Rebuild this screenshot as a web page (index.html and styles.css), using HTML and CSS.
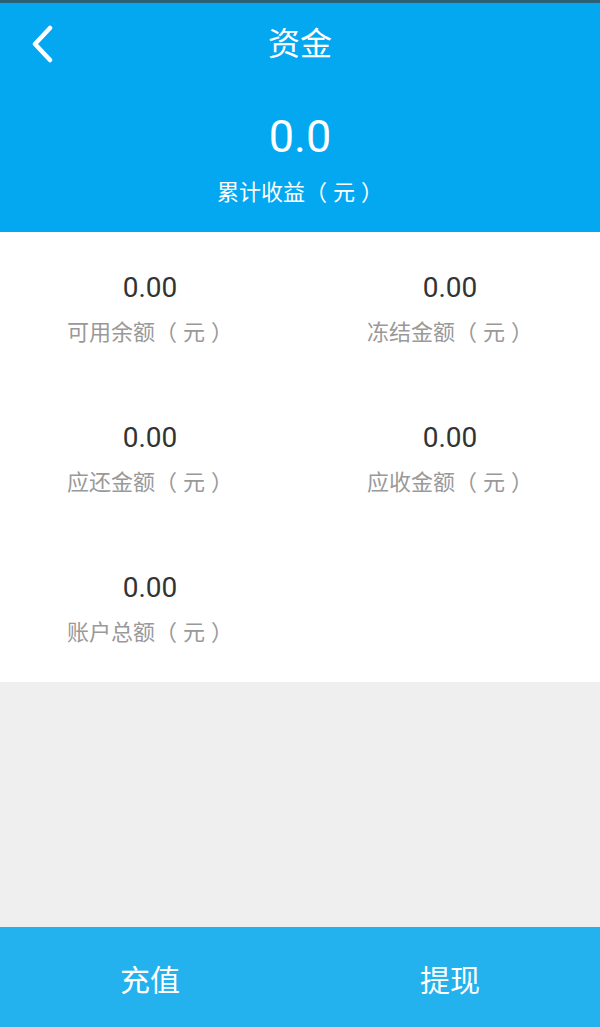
FILE: index.html
```html
<!DOCTYPE html>
<html lang="zh-CN">
<head>
    <meta charset="UTF-8">
    <meta name="viewport" content="width=device-width, initial-scale=1.0">
    <title>资金</title>
    <link rel="stylesheet" href="styles.css">
</head>
<body>
    <div class="page">
        <header class="header">
            <div class="nav">
                <a href="#" class="back">
                    <svg width="24" height="40" viewBox="0 0 24 40">
                        <polyline points="19,5 4,21 19,37" fill="none" stroke="#fff" stroke-width="4.5" stroke-linecap="round" stroke-linejoin="round"/>
                    </svg>
                </a>
                <h1 class="title">资金</h1>
            </div>
            <div class="total">0.0</div>
            <div class="total-label">累计收益（<span class="unit">元</span>）</div>
        </header>

        <section class="funds">
            <div class="item">
                <div class="value">0.00</div>
                <div class="label">可用余额（<span class="unit">元</span>）</div>
            </div>
            <div class="item">
                <div class="value">0.00</div>
                <div class="label">冻结金额（<span class="unit">元</span>）</div>
            </div>
            <div class="item">
                <div class="value">0.00</div>
                <div class="label">应还金额（<span class="unit">元</span>）</div>
            </div>
            <div class="item">
                <div class="value">0.00</div>
                <div class="label">应收金额（<span class="unit">元</span>）</div>
            </div>
            <div class="item">
                <div class="value">0.00</div>
                <div class="label">账户总额（<span class="unit">元</span>）</div>
            </div>
        </section>

        <div class="spacer"></div>

        <footer class="actions">
            <a href="#" class="action">充值</a>
            <a href="#" class="action">提现</a>
        </footer>
    </div>
</body>
</html>
```

FILE: styles.css
```css
body {
    margin: 0;
    font-family: Roboto, "Noto Sans CJK SC", sans-serif;
    background: #efefef;
}

.page {
    height: 1027px;
    display: flex;
    flex-direction: column;
}

.header {
    background: #03a8f1;
    border-top: 3px solid #2a6174;
    color: white;
    text-align: center;
    padding-bottom: 24px;
}

.nav {
    position: relative;
    height: 82px;
    display: flex;
    justify-content: center;
    align-items: center;
}

.back {
    position: absolute;
    left: 31px;
    top: 20px;
    display: block;
}

.title {
    margin: 0;
    font-size: 32px;
    font-weight: normal;
    line-height: 40px;
}

.total {
    margin-top: 24px;
    font-size: 45px;
    line-height: 56px;
}

.total-label,
.label {
    font-size: 22px;
    line-height: 30px;
}

.total-label {
    margin-top: 13px;
}

.unit {
    margin: 0 6px;
}

.funds {
    background: white;
    display: grid;
    grid-template-columns: 1fr 1fr;
}

.item {
    height: 150px;
    box-sizing: border-box;
    padding-top: 40px;
    text-align: center;
}

.value {
    font-size: 28px;
    line-height: 32px;
    color: #333;
}

.label {
    margin-top: 14px;
    color: #999;
}

.spacer {
    flex: 1;
}

.actions {
    height: 100px;
    background: #23b2ed;
    display: flex;
}

.action {
    flex: 1;
    display: flex;
    justify-content: center;
    align-items: center;
    color: white;
    font-size: 30px;
    text-decoration: none;
    padding-top: 2px;
}
```
